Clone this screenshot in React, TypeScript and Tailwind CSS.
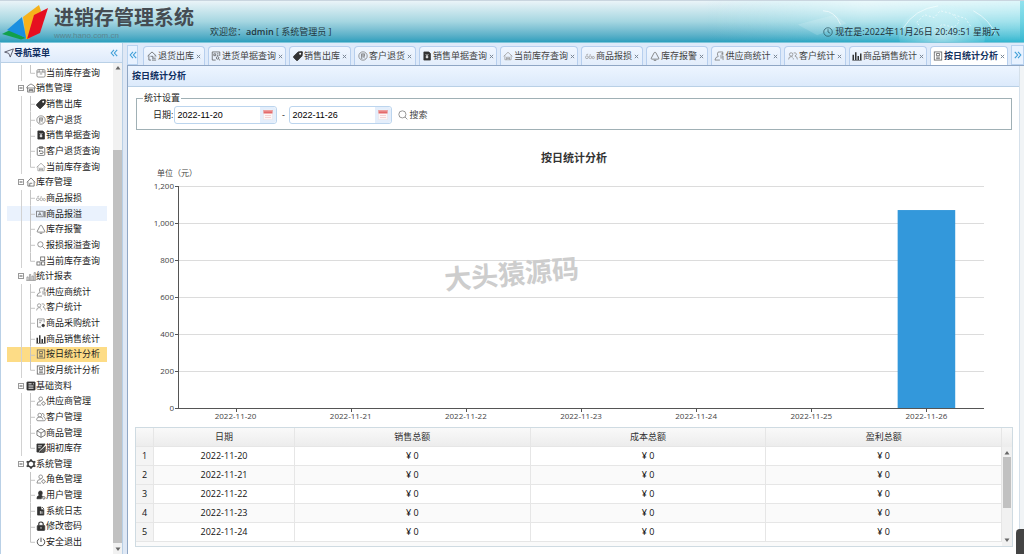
import React from "react";

type IconName =
  | "archive" | "store" | "tag" | "circleUser" | "docDark" | "clipboard" | "houseFaint" | "house" | "links"
  | "card" | "alarm" | "search" | "boxes" | "bars" | "supplier" | "users" | "purchase" | "barsDark" | "report"
  | "listDark" | "userGear" | "group" | "cube" | "editDark" | "gear" | "userDark" | "fileDark" | "lock" | "power"
  | "returnHouse" | "docSearch";

const glyphs: Record<IconName, React.ReactNode> = {
  archive: (
    <g stroke="#777">
      <rect x="1.5" y="2.5" width="13" height="12" rx="2" />
      <path d="M1.5 6.5h13M5 2.5v4M11 2.5v4M6 9.500h4" />
    </g>
  ),
  store: (
    <g stroke="#666">
      <path d="M1 8l2-3.500 5-3 5 3L15 8M2.500 7.500v7h11v-7M1 8h14M5 14V10.500h6V14M5 12h6" />
    </g>
  ),
  tag: (
    <g>
      <path d="M8 1.500L14 .8q1.200 0 1.200 1.200L14.500 8 7.500 15q-1 .8-2 0L1 10.500q-.8-1 0-2z" fill="#333" stroke="#333" />
      <circle cx="11.500" cy="4.500" r="1.600" fill="#fff" stroke="none" />
    </g>
  ),
  circleUser: (
    <g stroke="#777">
      <circle cx="8" cy="8" r="6.700" />
      <path d="M5.500 4.500h5v3.500h-5zM5.500 6.200h5M5.500 8v4l2-1M8 8.500l3 3.500M10.500 8.500L9 10" />
    </g>
  ),
  docDark: (
    <g>
      <path d="M3 1.500h8l2.500 2.500v10.500h-10.500z" fill="#333" stroke="#333" />
      <path d="M6 5l2 2.500L10 5M8 7.500V12M6 8.500h4M6 10.300h4" stroke="#fff" />
    </g>
  ),
  clipboard: (
    <g stroke="#555">
      <rect x="2" y="2.500" width="12" height="12.500" rx="1.500" />
      <path d="M5.500 1h5v3h-5zM5 8h4.500q2 0 2 2t-2 2H6M6.500 6.300L4.800 8l1.700 1.700" />
    </g>
  ),
  houseFaint: (
    <g stroke="#999">
      <path d="M1 8.500L8 2l7 6.500M3 7v7h10V7M5.500 14v-4h5v4M5.500 12h5" />
    </g>
  ),
  house: (
    <g stroke="#555">
      <path d="M1.500 8.500L8 1.500l6.500 7M3 7.500V14.500h10V7.500M6 14.500V10h4" />
    </g>
  ),
  links: (
    <g stroke="#999">
      <circle cx="3" cy="10" r="2.200" />
      <circle cx="8.500" cy="10" r="2.200" />
      <circle cx="13.200" cy="10.500" r="1.800" />
      <path d="M2 6l3-1M7 6.500l2-1" />
    </g>
  ),
  card: (
    <g stroke="#666">
      <rect x="1" y="3.500" width="10.500" height="9" />
      <path d="M3.500 10.500l2.500-5 2.500 5M4.500 9h3" />
      <path d="M14.200 3v10" strokeWidth="2" />
    </g>
  ),
  alarm: (
    <g stroke="#666">
      <path d="M8 2q1 0 1.500 1L14 11.500q.5 1.500-1 1.500H3q-1.500 0-1-1.500L6.500 3Q7 2 8 2zM6 15h4" />
    </g>
  ),
  search: (
    <g stroke="#777">
      <circle cx="7" cy="7" r="4.200" />
      <path d="M10.200 10.200L14 14" />
    </g>
  ),
  boxes: (
    <g stroke="#555">
      <rect x="7.500" y="1.500" width="6.500" height="6" />
      <rect x="1.500" y="9.500" width="5" height="5" />
      <rect x="9" y="9.500" width="5" height="5" />
    </g>
  ),
  bars: (
    <g stroke="#777" strokeWidth="1">
      <path d="M.5 15h15M1.500 15V9.500h2V15M5.500 15V5.500h2V15M9.500 15V8h2v7M13 15V2.500h2V15" />
    </g>
  ),
  supplier: (
    <g stroke="#777">
      <path d="M9.500 1.500q-4-1-4 3 0 3 1.500 4-5 1-5.500 6h8M9.500 1.500h4.500v5M9.500 8h5v6.500M11 5l3.500-1M10 11h4" />
    </g>
  ),
  users: (
    <g stroke="#888">
      <circle cx="5" cy="5.500" r="2.700" />
      <path d="M1 13.500q0-4.500 4-4.500 2 0 3 1.500M9 3.200q4-1.500 4.500 1.800 0 2-2.500 3 4 .5 4 5.500M8.500 13.500v-2" />
    </g>
  ),
  purchase: (
    <g stroke="#777">
      <path d="M13 7V1.500H2.500v13H8M5 4.500h5M5 7.500h3" />
      <circle cx="11.500" cy="12" r="2" fill="#333" stroke="#333" />
    </g>
  ),
  barsDark: (
    <g stroke="#333" strokeWidth="2.400">
      <path d="M2 14.500V6M6 14.500V2M10 14.500V8M14 14.500V4" />
      <path d="M.5 15h15" strokeWidth="1" />
    </g>
  ),
  report: (
    <g stroke="#555">
      <rect x="2" y="1.500" width="12" height="13" />
      <path d="M5.500 4h5v3.500h-5zM5 9.800h6M5 12.200h6" />
    </g>
  ),
  listDark: (
    <g>
      <rect x="1.500" y="1.500" width="13" height="13" rx="1" fill="#333" stroke="#333" />
      <path d="M4 4.500h5M4 8h8M4 11.500h8M11 4.500h1.500" stroke="#fff" strokeWidth="1.500" />
    </g>
  ),
  userGear: (
    <g stroke="#777">
      <circle cx="7.500" cy="4.500" r="3" />
      <path d="M1.500 14.500q0-6 6-6M1.500 14.500H8" />
      <circle cx="12" cy="12" r="2.500" />
      <path d="M12 8.500v1M12 14.500v1M8.700 12h.8M14.500 12h1" />
    </g>
  ),
  group: (
    <g stroke="#777">
      <circle cx="6" cy="5" r="3" />
      <path d="M9.500 2.200q3.500 0 3.500 3 0 1.500-1 2.300 3 1 3 4.500 0 2-2 2H3q-2 0-2-2 0-4 5-4t5 4" />
    </g>
  ),
  cube: (
    <g stroke="#555">
      <path d="M8 1l6.500 3.500v7L8 15l-6.500-3.500v-7zM1.500 4.500L8 8l6.500-3.500M8 8v7" />
    </g>
  ),
  editDark: (
    <g>
      <path d="M1.500 1.500h13L8 11l-1 3.500H1.500z" fill="#333" stroke="#333" />
      <path d="M15 4L5 13.500" stroke="#fff" strokeWidth="1.500" />
      <path d="M15 5.500L8 12.500l-2 2.500h7l1.500-1.500z" fill="#555" stroke="#333" />
      <path d="M3.500 4.500h6M3.500 7.500h4" stroke="#fff" />
    </g>
  ),
  gear: (
    <g stroke="#333">
      <path d="M8 2.500l4.800 2.700v5.600L8 13.500l-4.800-2.700V5.200z" strokeWidth="2.400" />
      <path d="M8 .3v2M8 13.700v2M1 4l1.800 1M13.200 11l1.800 1M15 4l-1.800 1M2.800 11L1 12" strokeWidth="2.600" />
    </g>
  ),
  userDark: (
    <g>
      <path d="M7 1.500q3.500 0 3 3.500-.3 2.500-1.500 3.500 1.500 1 2 1.500-2 1-2 4H1.500q-.5-4 4-5.500-1.500-1.500-1.500-3.500 0-3.500 3-3.500z" fill="#333" stroke="#333" />
      <circle cx="12.500" cy="12.500" r="2" stroke="#444" />
    </g>
  ),
  fileDark: (
    <g>
      <path d="M2.500 1.500H8v4.500h4.500v8.500h-10z" fill="#333" stroke="#333" />
      <path d="M9.500 1.500l3.500 3.500" stroke="#333" />
      <path d="M7 8v4.500M9.500 8.500v4" stroke="#fff" />
    </g>
  ),
  lock: (
    <g>
      <path d="M4.500 7V4.800Q4.500 1.500 8 1.500t3.500 3.300V7" stroke="#333" strokeWidth="1.800" />
      <rect x="2" y="7" width="12" height="8" rx="1" fill="#333" stroke="#333" />
      <path d="M8 9.500v3" stroke="#fff" />
    </g>
  ),
  power: (
    <g stroke="#444" strokeWidth="1.500">
      <path d="M8 1v7M5 2.800a6 6 0 1 0 6 0" />
    </g>
  ),
  returnHouse: (
    <g stroke="#555">
      <path d="M1 8L8 1.500 15 8M3 7v7.500h3.500M13 7v2M8 11.500h6M8 14.500h6.500M5.500 8.500h4v2.500" />
    </g>
  ),
  docSearch: (
    <g stroke="#555">
      <path d="M14 8V1.500H2v13h5.500M4.500 4.500h3v3h-3zM9.500 4.500h2.500M9.500 7h2.500" />
      <circle cx="10.500" cy="11" r="2" />
      <path d="M12 12.700l2.500 2.300" />
    </g>
  ),
};

function Icon({ name }: { name: IconName }) {
  return (
    <svg viewBox="0 0 16 16" className="size-[10px] shrink-0" fill="none" strokeWidth="1.200" aria-hidden="true">
      {glyphs[name]}
    </svg>
  );
}

type Leaf = [string, IconName];
type Group = { label: string; icon: IconName; items: Leaf[] };

const firstLeaf: Leaf = ["当前库存查询", "archive"];

const groups: Group[] = [
  {
    label: "销售管理", icon: "store",
    items: [["销售出库", "tag"], ["客户退货", "circleUser"], ["销售单据查询", "docDark"], ["客户退货查询", "clipboard"], ["当前库存查询", "houseFaint"]],
  },
  {
    label: "库存管理", icon: "house",
    items: [["商品报损", "links"], ["商品报溢", "card"], ["库存报警", "alarm"], ["报损报溢查询", "search"], ["当前库存查询", "boxes"]],
  },
  {
    label: "统计报表", icon: "bars",
    items: [["供应商统计", "supplier"], ["客户统计", "users"], ["商品采购统计", "purchase"], ["商品销售统计", "barsDark"], ["按日统计分析", "report"], ["按月统计分析", "report"]],
  },
  {
    label: "基础资料", icon: "listDark",
    items: [["供应商管理", "userGear"], ["客户管理", "group"], ["商品管理", "cube"], ["期初库存", "editDark"]],
  },
  {
    label: "系统管理", icon: "gear",
    items: [["角色管理", "userGear"], ["用户管理", "userDark"], ["系统日志", "fileDark"], ["修改密码", "lock"], ["安全退出", "power"]],
  },
];

const tabs: { label: string; icon: IconName; width: string }[] = [
  { label: "退货出库", icon: "returnHouse", width: "basis-[62px]" },
  { label: "进货单据查询", icon: "docSearch", width: "basis-[78px]" },
  { label: "销售出库", icon: "tag", width: "basis-[62px]" },
  { label: "客户退货", icon: "circleUser", width: "basis-[62px]" },
  { label: "销售单据查询", icon: "docDark", width: "basis-[78px]" },
  { label: "当前库存查询", icon: "houseFaint", width: "basis-[78px]" },
  { label: "商品报损", icon: "links", width: "basis-[62px]" },
  { label: "库存报警", icon: "alarm", width: "basis-[62px]" },
  { label: "供应商统计", icon: "supplier", width: "basis-[70px]" },
  { label: "客户统计", icon: "users", width: "basis-[62px]" },
  { label: "商品销售统计", icon: "barsDark", width: "basis-[78px]" },
  { label: "按日统计分析", icon: "report", width: "basis-[78px]" },
];

const days = ["2022-11-20", "2022-11-21", "2022-11-22", "2022-11-23", "2022-11-24", "2022-11-25", "2022-11-26"];
const totals = [0, 0, 0, 0, 0, 0, 1070];
const visibleRows = 5;

function Logo() {
  return (
    <svg viewBox="0 0 48 36" className="h-9 w-12 shrink-0" aria-hidden="true">
      <path d="M0 29l8-4 16 8-5 1.500z" fill="#12a04c" />
      <path d="M21 12L37 0l2 6-12 28h-3z" fill="#f6b21b" />
      <path d="M5 25L20 12l4 21z" fill="#1b8fe0" />
      <path d="M32 10l14-7-8 25-13 6z" fill="#e60f20" />
    </svg>
  );
}

function Header() {
  return (
    <header className="relative flex h-[43px] shrink-0 items-start overflow-hidden border-t border-b border-t-[#c9d5df] border-b-[#7fc6da] bg-linear-to-b from-[#eaf4f8] via-[#a5d6e1] via-50% to-[#2c9fbd]">
      <div className="absolute inset-y-0 right-0 w-[320px] bg-linear-to-r from-transparent to-[#37d0e4]/50" />
      <svg viewBox="0 0 320 42" className="absolute right-0 top-0 h-full w-[320px]" fill="none" aria-hidden="true">
        <defs>
          <radialGradient id="globe">
            <stop offset="0" stopColor="#ffffff" stopOpacity="0.5" />
            <stop offset="1" stopColor="#c9f5fa" stopOpacity="0.15" />
          </radialGradient>
          <linearGradient id="sky" x1="0" y1="0" x2="0" y2="1">
            <stop offset="0" stopColor="#ffffff" stopOpacity="0.7" />
            <stop offset="1" stopColor="#ffffff" stopOpacity="0" />
          </linearGradient>
          <linearGradient id="skyFade" x1="0" y1="0" x2="1" y2="0">
            <stop offset="0" stopColor="#000" />
            <stop offset="0.5" stopColor="#fff" />
          </linearGradient>
          <mask id="skyMask">
            <rect width="320" height="42" fill="url(#skyFade)" />
          </mask>
        </defs>
        <path d="M0 0h320v42H0z" fill="url(#sky)" mask="url(#skyMask)" />
        <ellipse cx="240" cy="36" rx="44" ry="32" fill="url(#globe)" />
        <path d="M200 28q12-20 36-23M272 10q18 10 22 24M118 10q12 0 18 14" stroke="#fff" strokeOpacity="0.6" />
        <path d="M214 22l8-8 10 3 6-7 12 3 8 8-6 6-12-3-8 7-12-2zM252 14l12 4 6 9" stroke="#fff" strokeOpacity="0.6" strokeDasharray="2 2" />
        <path d="M92 24l38-10 12 9-30 12z" fill="#fff" fillOpacity="0.15" />
      </svg>
      <div className="relative flex w-full items-start pl-[2px] pt-1">
        <Logo />
        <div className="ml-1 flex flex-col text-[#454c52]">
          <h1 className="text-[20px] font-bold leading-[26px]">进销存管理系统</h1>
          <span className="font-['Liberation_Sans'] text-[8px] leading-[10px] text-[#5b8791]">www.hano.com.cn</span>
        </div>
        <p className="ml-4 mt-5 leading-[14px] text-[#1f3740]">
          欢迎您：<b className="font-semibold">admin</b> [ 系统管理员 ]
        </p>
        <p className="ml-auto mr-6 mt-5 flex items-center gap-[2px] leading-[14px] text-[#1c3038]">
          <svg viewBox="0 0 16 16" className="size-[10px]" fill="none" stroke="#2c5560" strokeWidth="1.200" aria-hidden="true">
            <circle cx="8" cy="8" r="6.800" />
            <path d="M8 3.500V8l3.500 2" />
          </svg>
          现在是:2022年11月26日 20:49:51 星期六
        </p>
      </div>
    </header>
  );
}

function Elbow({ last }: { last: boolean }) {
  return (
    <svg viewBox="0 0 10 16" className="h-full w-[10px] shrink-0" preserveAspectRatio="none" stroke="#c4c4c4" fill="none" aria-hidden="true">
      <path d={last ? "M4.500 0v8.500H9" : "M4.500 0v16M4.500 8.500H9"} />
    </svg>
  );
}

function LeafRow({ leaf, last, guide }: { leaf: Leaf; last: boolean; guide: boolean }) {
  const [label, icon] = leaf;
  const tone = label === "按日统计分析" ? "bg-[#fddc86]" : label === "商品报溢" ? "bg-[#eaf2fd]" : "";
  return (
    <li className={`min-h-0 flex-1 ${tone}`}>
      <a href="#" className="flex h-full items-center pl-[9px]">
        <span className="flex h-full w-[10px] shrink-0 justify-center">
          {guide && <span className="h-full w-px bg-[#d2d2d2]" />}
        </span>
        <Elbow last={last} />
        <Icon name={icon} />
        <span className="whitespace-nowrap">{label}</span>
      </a>
    </li>
  );
}

function GroupRow({ group }: { group: Group }) {
  return (
    <li className="min-h-0 flex-1">
      <button type="button" className="flex h-full items-center pl-[9px]">
        <svg viewBox="0 0 10 10" className="size-[10px]" fill="#fff" stroke="#999" aria-hidden="true">
          <rect x="2.500" y="2.500" width="5" height="5" />
          <path d="M3.500 5h3" stroke="#555" />
        </svg>
        <Icon name={group.icon} />
        <span className="whitespace-nowrap">{group.label}</span>
      </button>
    </li>
  );
}

function Sidebar() {
  return (
    <aside className="flex w-[123px] shrink-0 flex-col border-x border-[#b9d0e6] bg-white">
      <div className="flex h-5 shrink-0 items-center border-b border-[#b9d0e6] bg-linear-to-b from-[#f3f8ff] to-[#dfebfb] pl-[3px] pr-1">
        <svg viewBox="0 0 16 16" className="size-[10px]" fill="none" stroke="#445" strokeWidth="1.300" aria-hidden="true">
          <path d="M1 6.500L15 1.500 10 14.500 7.500 8.500z" />
        </svg>
        <h2 className="font-bold text-[#0e2d5f]">导航菜单</h2>
        <button type="button" aria-label="收起" className="ml-auto">
          <Chevrons />
        </button>
      </div>
      <div className="flex min-h-0 flex-1">
        <nav className="flex min-w-0 flex-1 flex-col pb-1 pt-[2px] text-[#222]">
          <ul className="mx-[6px] flex min-h-0 flex-1 flex-col">
            <LeafRow leaf={firstLeaf} last guide />
            {groups.map((group, g) => (
              <React.Fragment key={group.label}>
                <GroupRow group={group} />
                {group.items.map((leaf, i) => (
                  <LeafRow key={leaf[0]} leaf={leaf} last={i === group.items.length - 1} guide={g < groups.length - 1} />
                ))}
              </React.Fragment>
            ))}
          </ul>
        </nav>
        <div className="flex w-[9px] flex-col items-center bg-[#f1f1f1] py-[3px]">
          <Arrow up />
          <div className="mt-20 w-full flex-1 bg-[#c1c1c1]" />
          <span className="h-1" />
          <Arrow />
        </div>
      </div>
    </aside>
  );
}

function Chevrons({ right = false }: { right?: boolean }) {
  return (
    <svg viewBox="0 0 10 10" className={right ? "size-2 rotate-180" : "size-2"} fill="none" stroke="#3f9fd8" strokeWidth="1.400" aria-hidden="true">
      <path d="M5 1L1.500 5 5 9M9 1L5.500 5 9 9" />
    </svg>
  );
}

function Arrow({ up = false }: { up?: boolean }) {
  return (
    <svg viewBox="0 0 6 4" className={up ? "h-1 w-[6px] shrink-0" : "h-1 w-[6px] shrink-0 rotate-180"} aria-hidden="true">
      <path d="M3 0l2.500 3.500h-5z" fill="#666" />
    </svg>
  );
}

function TabBar() {
  return (
    <div className="flex h-[23px] shrink-0 items-end border-b border-[#8fa6c4] bg-[#deeafa] pt-[2px]">
      <button type="button" aria-label="向左" className="flex h-full w-[11px] shrink-0 items-center justify-center border border-[#b9d3f0] bg-[#e8f2ff]">
        <Chevrons />
      </button>
      <div role="tablist" className="ml-[5px] flex h-[19px] min-w-0 flex-1 gap-[3px]">
        {tabs.map((tab, i) => {
          const active = i === tabs.length - 1;
          return (
            <div
              key={tab.label}
              className={`flex shrink-0 items-center justify-center rounded-t border border-b-0 border-[#b7cfee] ${tab.width} ${
                active ? "bg-white font-bold text-[#17335f]" : "bg-linear-to-b from-[#f0f6ff] to-[#e3edfb] text-[#444]"
              }`}
            >
              <button type="button" role="tab" aria-selected={active} className="flex items-center gap-px whitespace-nowrap">
                <Icon name={tab.icon} />
                <span>{tab.label}</span>
              </button>
              <button type="button" aria-label="关闭" className="ml-[2px] shrink-0">
                <svg viewBox="0 0 6 6" className="size-[5px]" stroke="#7b8796" strokeWidth="1.200" aria-hidden="true">
                  <path d="M1 1l4 4M5 1L1 5" />
                </svg>
              </button>
            </div>
          );
        })}
      </div>
      <button type="button" aria-label="向右" className="flex h-full w-[13px] shrink-0 items-center justify-center border border-[#b9d3f0] bg-[#e8f2ff]">
        <Chevrons right />
      </button>
    </div>
  );
}

function DateField({ id, value, label }: { id: string; value: string; label: string }) {
  return (
    <span className="flex h-[18px] w-[103px] items-center rounded-[3px] border border-[#bcd5ee] bg-white">
      <input id={id} aria-label={label} defaultValue={value} className="min-w-0 flex-1 pl-[2px] font-['Liberation_Sans'] text-[9px] leading-4 text-black outline-none" />
      <button type="button" aria-label="选择日期" className="flex h-full w-4 items-center justify-center rounded-r-[3px] bg-[#e4eefb]">
        <svg viewBox="0 0 10 12" className="h-3 w-[10px]" aria-hidden="true">
          <path d="M.5 1.500h9v9h-9z" fill="#fdf6f6" stroke="#e9e2e6" strokeWidth="0.600" />
          <path d="M.5 1h9v3.500h-9z" fill="#e46a6a" />
          <path d="M2 .5v2M4 .5v2M6 .5v2M8 .5v2" stroke="#fff" strokeWidth="0.700" />
          <path d="M2 6.500h6M2 8.500h6" stroke="#f2c9c9" strokeWidth="0.800" />
        </svg>
      </button>
    </span>
  );
}

function Filters() {
  return (
    <fieldset className="ml-2 mr-[7px] mt-[5px] border border-[#a0b0b5] pb-[5px] pl-4 pt-[2px] text-[#222]">
      <legend className="-ml-[10px] px-[1px] leading-3">统计设置</legend>
      <div className="flex h-[18px] items-center">
        <label htmlFor="from">日期:</label>
        <span className="ml-px">
          <DateField id="from" value="2022-11-20" label="开始日期" />
        </span>
        <span className="w-3 text-center">-</span>
        <DateField id="to" value="2022-11-26" label="结束日期" />
        <button type="button" className="ml-[6px] flex items-center gap-[1px] text-[#444]">
          <svg viewBox="0 0 16 16" className="size-[10px]" fill="none" stroke="#777" strokeWidth="1.200" aria-hidden="true">
            <circle cx="7" cy="7" r="5.700" />
            <path d="M11.200 11.200L15 15" />
          </svg>
          搜索
        </button>
      </div>
    </fieldset>
  );
}

function Chart() {
  const left = 43;
  const right = 849;
  const base = 278;
  const step = 37;
  const slot = (right - left) / days.length;
  const ticks = ["0", "200", "400", "600", "800", "1,000", "1,200"];
  return (
    <div className="relative ml-[7px] mr-[6px]">
      <svg viewBox="0 0 878 297" className="block w-full" fontSize="8" fill="#444" role="img" aria-label="按日统计分析">
        <text x="439" y="32" fontSize="11" fontWeight="bold" fill="#333" textAnchor="middle">按日统计分析</text>
        <text x="42" y="46" textAnchor="middle">单位（元）</text>
        {ticks.map((t, i) => (
          <g key={t}>
            {i > 0 && <path d={`M${left} ${base - i * step + 0.5}H${right}`} stroke="#dcdcdc" />}
            <path d={`M${left - 3} ${base - i * step + 0.5}h3`} stroke="#555" />
            <text x={left - 4} y={base - i * step + 3} textAnchor="end">{t}</text>
          </g>
        ))}
        {totals.map((v, i) =>
          v > 0 ? (
            <rect key={days[i]} x={left + slot * i + slot / 4} y={base - (v / 200) * step} width={slot / 2} height={(v / 200) * step} fill="#3398db" />
          ) : null,
        )}
        <path d={`M${left + 0.5} 56v223M${left} 278.500H${right}`} stroke="#555" fill="none" />
        {days.map((d, i) => (
          <g key={d}>
            <path d={`M${Math.round(left + slot * (i + 0.5)) + 0.5} 279v3`} stroke="#555" />
            <text x={left + slot * (i + 0.5)} y="289" textAnchor="middle">{d}</text>
          </g>
        ))}
      </svg>
      <span className="pointer-events-none absolute left-[309px] top-[124px] -rotate-5 whitespace-nowrap text-[27px] font-bold leading-10 text-[#cdcdcd]">
        大头猿源码
      </span>
    </div>
  );
}

function Grid() {
  const cell = "h-[19px] border-b border-r border-[#e6e6e6] p-0 text-center";
  return (
    <div className="mb-[7px] ml-[7px] mr-[6px] flex min-h-0 flex-1 overflow-hidden border border-[#cfdbe2]">
      <div className="flex min-w-0 flex-1 flex-col bg-[#fafafa]">
        <table className="w-full table-fixed border-separate border-spacing-0 bg-white text-[#111]">
          <colgroup>
            <col className="w-[18px]" />
            <col className="w-[141px]" />
            <col />
            <col />
            <col />
          </colgroup>
          <thead className="bg-linear-to-b from-[#f9f9f9] to-[#ececec] text-[#333]">
            <tr>
              <th className={cell} aria-label="序号" />
              {["日期", "销售总额", "成本总额", "盈利总额"].map((h) => (
                <th key={h} scope="col" className={`${cell} font-normal`}>{h}</th>
              ))}
            </tr>
          </thead>
          <tbody>
            {days.slice(0, visibleRows).map((d, i) => (
              <tr key={d} className="even:bg-[#fafafa]">
                <td className={`${cell} bg-[#f4f4f4]`}>{i + 1}</td>
                <td className={cell}>{d}</td>
                <td className={cell}>¥ {totals[i]}</td>
                <td className={cell}>¥ {totals[i]}</td>
                <td className={cell}>¥ {totals[i]}</td>
              </tr>
            ))}
          </tbody>
        </table>
      </div>
      <div className="flex w-[10px] shrink-0 flex-col items-center bg-[#f1f1f1] pb-1">
        <div className="h-[19px] w-full bg-linear-to-b from-[#f9f9f9] to-[#ececec]" />
        <span className="h-1" />
        <Arrow up />
        <div className="mt-[2px] h-[51px] w-2 bg-[#c1c1c1]" />
        <span className="flex-1" />
        <Arrow />
      </div>
    </div>
  );
}

export default function App() {
  return (
    <div className="relative flex h-screen flex-col overflow-hidden bg-white font-['Open_Sans','Noto_Sans_CJK_SC',sans-serif] text-[9px] leading-3">
      <Header />
      <div className="flex min-h-0 flex-1">
        <Sidebar />
        <div className="w-1 shrink-0 bg-[#dfe8f5]" />
        <main className="flex min-w-0 flex-1 flex-col">
          <TabBar />
          <div className="flex min-h-0 flex-1 bg-[#f1f4f6]">
            <section className="mr-[4px] flex min-w-0 flex-1 flex-col border-x border-l-[#8fa6c4] border-r-[#d5e0ea] bg-white">
              <h2 className="h-[21px] shrink-0 border-b border-[#b9d0e6] bg-linear-to-b from-[#edf5ff] to-[#dceafb] pl-1 leading-5 font-bold text-[#0e2d5f]">
                按日统计分析
              </h2>
              <Filters />
              <Chart />
              <Grid />
            </section>
          </div>
        </main>
      </div>
      <div className="absolute bottom-0 right-0 h-[25px] w-2 rounded-tl-sm bg-[#444]" />
    </div>
  );
}
